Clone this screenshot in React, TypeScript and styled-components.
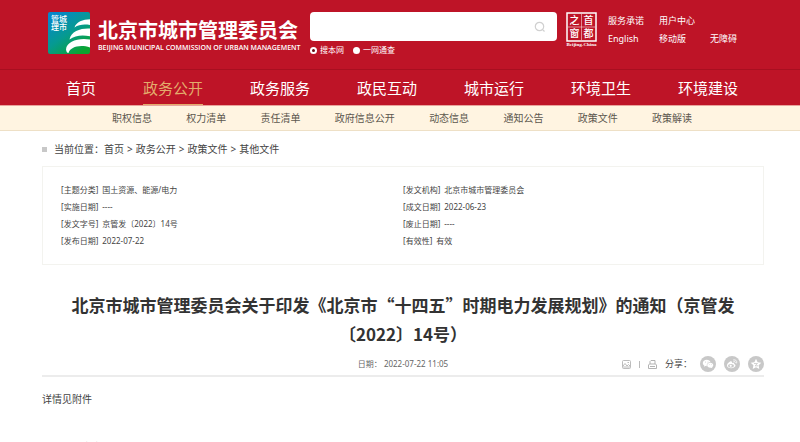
import React from "react";
import styled, { createGlobalStyle, css } from "styled-components";

const cjk = `"Noto Sans CJK SC"`;
const sans = `"Noto Sans", ${cjk}, sans-serif`;
const red = "#be1427";

const GlobalStyle = createGlobalStyle`
  * { box-sizing: border-box; }
  body { margin: 0; background: #fff; color: #444; font: 10px/16px ${sans}; overflow: hidden; }
  a { color: inherit; text-decoration: none; }
  ul, ol, dl, dd, h1, p { margin: 0; padding: 0; list-style: none; }
  button { border: 0; padding: 0; background: none; color: inherit; font: inherit; cursor: pointer; }
`;

const Header = styled.header`
  background: ${red};
  color: #fff;
`;

const TopBar = styled.div`
  display: flex;
  align-items: flex-start;
  height: 70px;
  padding: 12px 48px 0;
  border-bottom: 1px solid #a80f20;
`;

const Brand = styled.a`
  display: flex;
  gap: 8px;
  width: 262px;
  flex: none;
`;

const BrandText = styled.span`
  display: flex;
  flex-direction: column;
  white-space: nowrap;
`;

const BrandName = styled.span`
  padding-top: 4px;
  font: 700 20px/28px ${cjk}, sans-serif;
`;

const BrandEnglish = styled.span`
  font: 600 7px/8px "Open Sans", sans-serif;
`;

const Search = styled.form`
  flex: 0 0 247px;
`;

const SearchBox = styled.div`
  display: flex;
  align-items: center;
  height: 29px;
  padding-right: 11px;
  border-radius: 4px;
  background: #fff;
  color: #d0d0d0;
  svg { display: block; }
`;

const SearchInput = styled.input`
  flex: 1;
  min-width: 0;
  height: 100%;
  padding: 0 8px;
  border: 0;
  outline: 0;
  background: none;
  font: inherit;
`;

const Scopes = styled.div`
  display: flex;
  gap: 9px;
  padding-top: 3px;
  font-size: 8px;
  line-height: 12px;
`;

const Scope = styled.label`
  display: flex;
  align-items: center;
  gap: 3px;
`;

const Radio = styled.input`
  appearance: none;
  width: 7px;
  height: 7px;
  margin: 0;
  border: 2px solid #fff;
  border-radius: 50%;
  background: #fff;
  &:checked { background: #6b0a14; }
`;

const Seal = styled.svg`
  flex: none;
  margin-left: 8px;
`;

const QuickLinks = styled.ul`
  display: grid;
  grid-template-columns: repeat(3, 51px);
  margin-left: 10px;
  font-size: 9px;
  line-height: 18px;
  white-space: nowrap;
`;

const QuickItem = styled.li<{ $last?: boolean }>`
  ${(p) => p.$last && css`grid-column: 2 / 4;`}
`;

const MainNav = styled.nav`
  border-bottom: 1px solid #e9a39c;
`;

const MainList = styled.ul`
  display: flex;
  justify-content: space-between;
  padding: 0 62px 0 66px;
`;

const MainLink = styled.a<{ $active?: boolean }>`
  display: block;
  height: 35px;
  font-size: 15px;
  line-height: 36px;
  ${(p) => p.$active && css`
    color: #e3ac6c;
    box-shadow: inset 0 -1px #e3ac6c;
  `}
`;

const SubNav = styled.nav`
  background: #fff4e1;
  border-bottom: 1px solid #eee0c6;
  color: #5c574e;
`;

const SubList = styled.ul`
  display: flex;
  justify-content: space-between;
  padding: 0 108px 0 112px;
  line-height: 24px;
`;

const Page = styled.main`
  padding: 0 36px 0 42px;
`;

const Crumbs = styled.nav`
  display: flex;
  align-items: center;
  padding: 10px 0 9px;
  &::before { content: ""; width: 5px; height: 5px; margin-right: 7px; background: #c8c8c8; }
`;

const CrumbList = styled.ol`
  display: flex;
`;

const Crumb = styled.li`
  & + &::before { content: ">"; margin: 0 3px; }
`;

const Meta = styled.dl`
  display: grid;
  grid-template-columns: 342px 1fr;
  padding: 14px 18px 15px;
  border: 1px solid #f3f3ef;
  font-size: 8px;
  line-height: 17px;
`;

const MetaRow = styled.div`
  display: flex;
  gap: 4px;
`;

const Title = styled.h1`
  padding: 25px 26px 0;
  color: #333;
  font: 700 17px/29px ${cjk}, sans-serif;
  text-align: center;
`;

const InfoBar = styled.div`
  display: grid;
  grid-template-columns: 1fr auto 1fr;
  align-items: center;
  padding: 8px 0 3px;
  border-bottom: 2px solid #ececec;
  font-size: 8px;
`;

const Published = styled.p`
  grid-column: 2;
  color: #666;
`;

const Tools = styled.div`
  display: flex;
  align-items: center;
  justify-content: flex-end;
  gap: 8px;
  svg { display: block; }
`;

const ToolDivider = styled.span`
  width: 1px;
  height: 7px;
  background: #bbb;
`;

const ShareLabel = styled.span`
  font-size: 9px;
`;

const Round = styled.button`
  display: grid;
  place-items: center;
  width: 16px;
  height: 16px;
  border-radius: 50%;
  background: #c8c8c8;
  color: #fff;
`;

const Article = styled.article`
  padding-top: 12px;
  line-height: 20px;
`;

const Attachment = styled.p`
  padding-top: 28px;
`;

const mainItems = ["首页", "政务公开", "政务服务", "政民互动", "城市运行", "环境卫生", "环境建设"];
const subItems = ["职权信息", "权力清单", "责任清单", "政府信息公开", "动态信息", "通知公告", "政策文件", "政策解读"];
const crumbs = ["首页", "政务公开", "政策文件", "其他文件"];
const quick = ["服务承诺", "用户中心", "English", "移动版", "无障碍"];
const meta = [
  ["主题分类", "国土资源、能源/电力"],
  ["发文机构", "北京市城市管理委员会"],
  ["实施日期", "----"],
  ["成文日期", "2022-06-23"],
  ["发文字号", "京管发〔2022〕14号"],
  ["废止日期", "----"],
  ["发布日期", "2022-07-22"],
  ["有效性", "有效"],
];

const Logo = () => (
  <svg width="42" height="42" viewBox="0 0 42 42" aria-hidden="true">
    <defs>
      <linearGradient id="logo" x1="0.1" y1="0.1" x2="0.75" y2="1">
        <stop offset="0" stopColor="#0787c9" />
        <stop offset="0.5" stopColor="#069a91" />
        <stop offset="1" stopColor="#0aa52f" />
      </linearGradient>
    </defs>
    <rect width="42" height="42" rx="2" fill="url(#logo)" />
    <g fill="#fff" fontFamily="Noto Sans CJK SC" fontSize="8" fontWeight="500">
      <text x="3" y="10">管城</text>
      <text x="3" y="18">理市</text>
    </g>
    <path d="M42 7.300C35 7.500 28 10 26.500 15.500C31 12.500 36 12 42 13Z" fill="#fff" />
    <path d="M42 16.500C33 16 23 19 21.500 27.500C27 23.500 34 22.500 42 24.300Z" fill="#fff" />
    <path d="M42 27.500C31 25.500 18.500 29 18 37.500Q18.500 41 20.500 41C22 35 32 32 42 35.500Z" fill="#fff" />
  </svg>
);

const BeijingSeal = () => (
  <Seal width="33" height="36" viewBox="0 0 33 36" role="img" aria-label="首都之窗">
    <rect x="2" y="1" width="29" height="28" fill="none" stroke="#fff" strokeWidth="1.500" />
    <path d="M16.500 2V28M3 15H30" stroke="#fff" strokeOpacity="0.500" strokeWidth="1" />
    <g fill="#fff" fontFamily="Noto Sans CJK SC" fontSize="10" fontWeight="500" textAnchor="middle">
      <text x="9.500" y="12">之</text>
      <text x="23.500" y="12">首</text>
      <text x="9.500" y="25">窗</text>
      <text x="23.500" y="25">都</text>
    </g>
    <text x="16.500" y="34" fill="#fff" fontFamily="Liberation Serif" fontSize="5" fontWeight="700" textAnchor="middle">Beijing-China</text>
  </Seal>
);

const SearchIcon = () => (
  <svg width="12" height="12" viewBox="0 0 12 12" fill="none" stroke="currentColor" strokeWidth="1.200" aria-hidden="true">
    <circle cx="5.500" cy="5.500" r="4.200" />
    <path d="M8.600 8.600L10.500 10.500" />
  </svg>
);

const PictureIcon = () => (
  <svg width="9" height="9" viewBox="0 0 9 9" fill="none" stroke="#b4b4b4" strokeWidth="0.900" aria-hidden="true">
    <rect x="0.500" y="0.500" width="8" height="8" rx="1" />
    <path d="M1 6L3 3.500L5 6L6.500 4.500L8 6M1 7H8M5.500 2.500H7" />
  </svg>
);

const PrinterIcon = () => (
  <svg width="9" height="9" viewBox="0 0 9 9" fill="none" stroke="#aaa" strokeWidth="0.900" aria-hidden="true">
    <path d="M2 4V1.500L3 0.500H7V4M1.500 4H7.500L8.500 5V8.500H0.500V5ZM2 6.500H7" />
  </svg>
);

const WechatIcon = () => (
  <svg width="12" height="12" viewBox="0 0 12 12" fill="currentColor" aria-hidden="true">
    <path d="M4.700 1.800C2.500 1.800 0.800 3.200 0.800 5C0.800 6 1.400 6.900 2.300 7.500L2 8.700L3.400 8C3.900 8.100 4.300 8.200 4.800 8.100C4.300 6 6 4.200 8.500 4.200C8.200 2.800 6.600 1.800 4.700 1.800Z" />
    <path d="M8.300 4.800C6.500 4.800 5.200 5.900 5.200 7.300C5.200 8.700 6.500 9.800 8.300 9.800L9.200 9.700L10.300 10.300L10.100 9.200C10.900 8.700 11.300 8 11.300 7.300C11.300 5.900 10 4.800 8.300 4.800Z" />
    <g fill="#c8c8c8"><circle cx="3.500" cy="4" r="0.500" /><circle cx="6" cy="4" r="0.500" /><circle cx="7.300" cy="6.700" r="0.400" /><circle cx="9.300" cy="6.700" r="0.400" /></g>
  </svg>
);

const WeiboIcon = () => (
  <svg width="12" height="12" viewBox="0 0 12 12" fill="none" stroke="currentColor" aria-hidden="true">
    <path d="M5 3.300C3.500 3.300 1 5.800 1 7.500C1 9.200 3 10.200 5.200 10.200C7.700 10.200 9.500 8.800 9.500 7.500C9.500 6.600 8.900 6.200 8.100 6C8.400 5 7.800 4.500 6 5.100C6.200 4.200 6 3.300 5 3.300Z" fill="currentColor" stroke="none" />
    <ellipse cx="5" cy="7.700" rx="2.900" ry="1.800" fill="#c8c8c8" stroke="none" />
    <circle cx="4.700" cy="7.800" r="1.100" fill="currentColor" stroke="none" />
    <path d="M7.600 1.800C9.800 1.400 11.300 3 10.700 5M7.800 3.300C8.900 3.100 9.500 3.800 9.300 4.700" strokeWidth="0.800" strokeLinecap="round" />
  </svg>
);

const StarIcon = () => (
  <svg width="12" height="12" viewBox="0 0 12 12" aria-hidden="true">
    <path d="M6 0.800L7.600 4.200L11.300 4.700L8.600 7.300L9.300 11L6 9.200L2.700 11L3.400 7.300L0.700 4.700L4.400 4.200Z" fill="currentColor" />
    <path d="M4 5.500H7.500L5 7.800H8" fill="none" stroke="#c8c8c8" strokeWidth="0.800" />
  </svg>
);

export default function App() {
  return (
    <>
      <GlobalStyle />
      <Header>
        <TopBar>
          <Brand href="#">
            <Logo />
            <BrandText>
              <BrandName>北京市城市管理委员会</BrandName>
              <BrandEnglish>BEIJING MUNICIPAL COMMISSION OF URBAN MANAGEMENT</BrandEnglish>
            </BrandText>
          </Brand>
          <Search onSubmit={(e) => e.preventDefault()}>
            <SearchBox>
              <SearchInput type="text" aria-label="搜索" />
              <button type="submit" aria-label="搜索"><SearchIcon /></button>
            </SearchBox>
            <Scopes>
              <Scope><Radio type="radio" name="scope" defaultChecked />搜本网</Scope>
              <Scope><Radio type="radio" name="scope" />一网通查</Scope>
            </Scopes>
          </Search>
          <BeijingSeal />
          <QuickLinks>
            {quick.map((q, i) => (
              <QuickItem key={q} $last={i === 1}><a href="#">{q}</a></QuickItem>
            ))}
          </QuickLinks>
        </TopBar>
        <MainNav aria-label="主导航">
          <MainList>
            {mainItems.map((m) => (
              <li key={m}><MainLink href="#" $active={m === "政务公开"}>{m}</MainLink></li>
            ))}
          </MainList>
        </MainNav>
      </Header>
      <SubNav aria-label="政务公开">
        <SubList>
          {subItems.map((s) => <li key={s}><a href="#">{s}</a></li>)}
        </SubList>
      </SubNav>
      <Page>
        <Crumbs aria-label="当前位置">
          <span>当前位置：</span>
          <CrumbList>
            {crumbs.map((c) => <Crumb key={c}><a href="#">{c}</a></Crumb>)}
          </CrumbList>
        </Crumbs>
        <Meta>
          {meta.map(([k, v]) => (
            <MetaRow key={k}><dt>[{k}]</dt><dd>{v}</dd></MetaRow>
          ))}
        </Meta>
        <Title>北京市城市管理委员会关于印发《北京市“十四五”时期电力发展规划》的通知（京管发〔2022〕14号）</Title>
        <InfoBar>
          <Published>日期： <time>2022-07-22 11:05</time></Published>
          <Tools>
            <button aria-label="图片"><PictureIcon /></button>
            <ToolDivider />
            <button aria-label="打印"><PrinterIcon /></button>
            <ShareLabel>分享：</ShareLabel>
            <Round aria-label="微信"><WechatIcon /></Round>
            <Round aria-label="微博"><WeiboIcon /></Round>
            <Round aria-label="收藏"><StarIcon /></Round>
          </Tools>
        </InfoBar>
        <Article>
          <p>详情见附件</p>
          <Attachment><a href="#">附件：北京市“十四五”时期电力发展规划</a></Attachment>
        </Article>
      </Page>
    </>
  );
}
